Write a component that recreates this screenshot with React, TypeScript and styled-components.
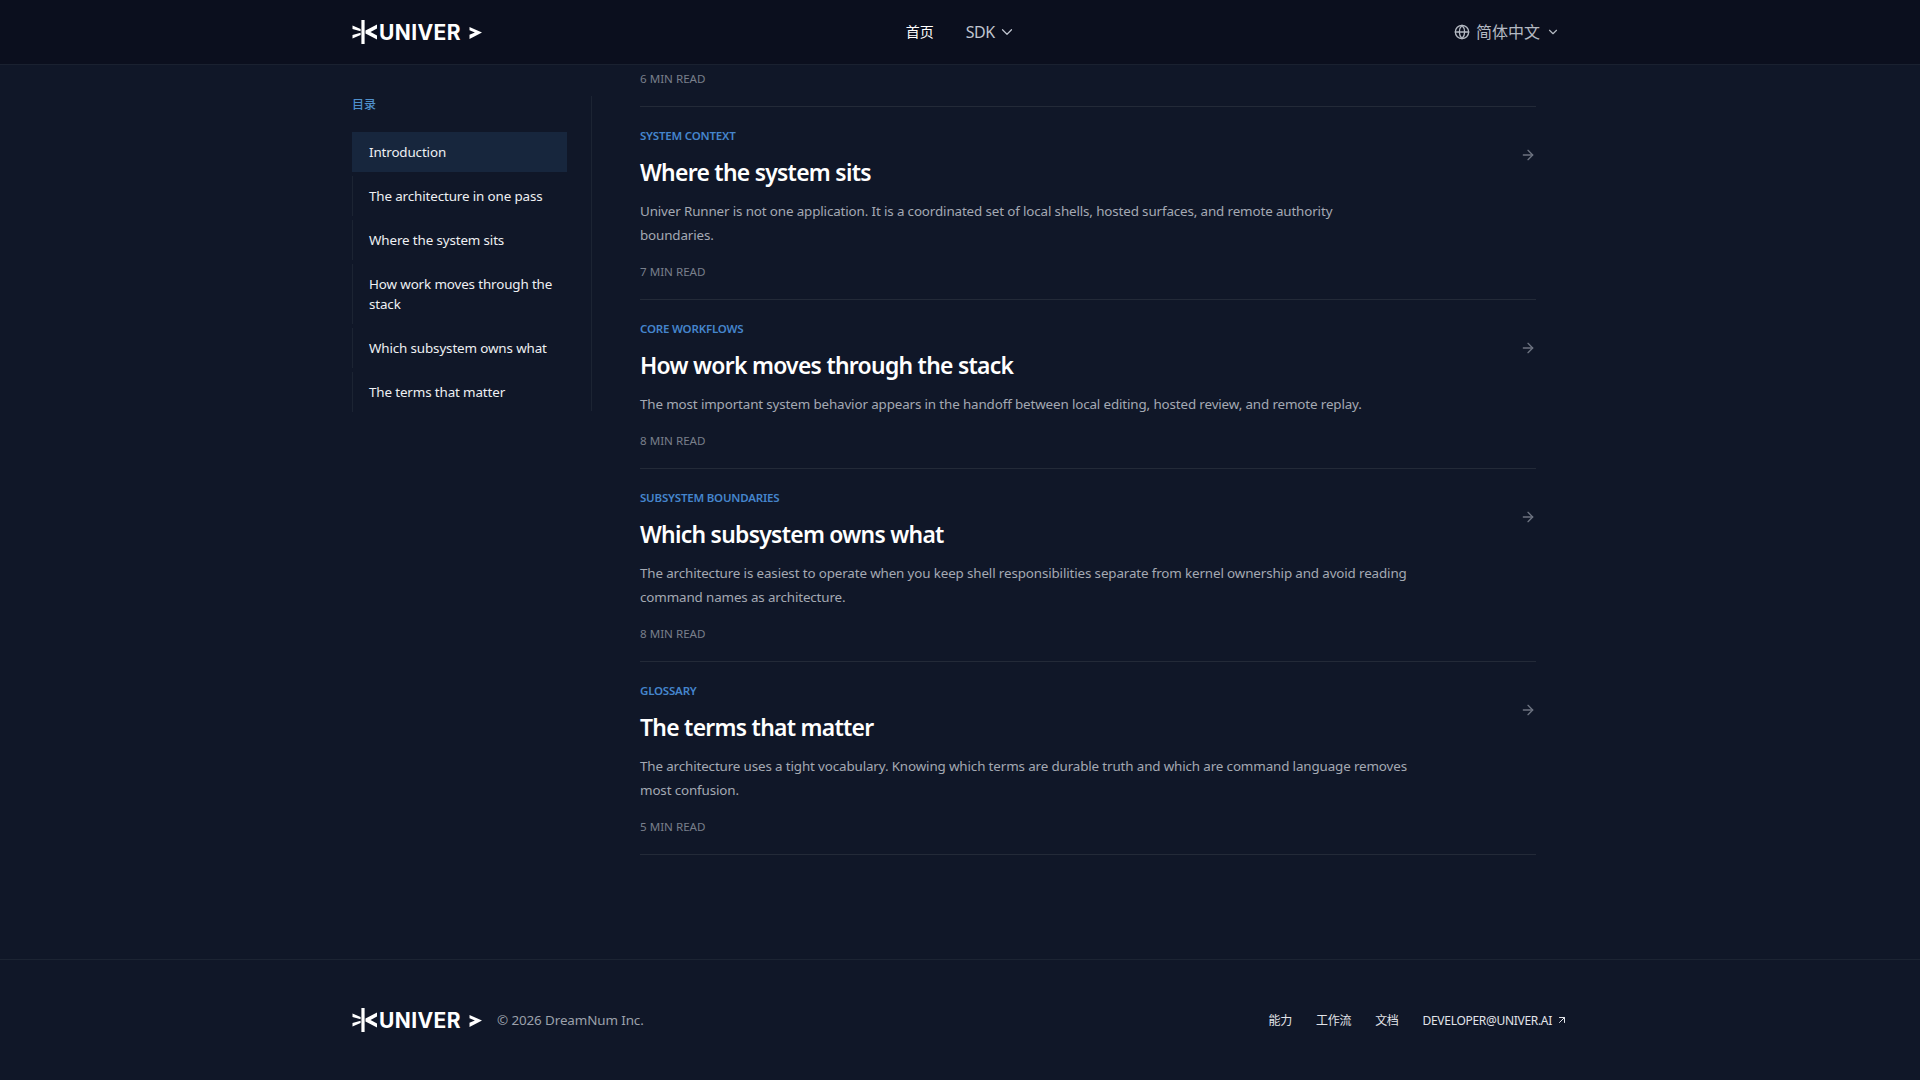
import React from 'react';
import styled, { createGlobalStyle } from 'styled-components';
import { ChevronDown, Globe, ArrowRight, ArrowUpRight } from 'lucide-react';

const Global = createGlobalStyle`
  html, body { margin: 0; padding: 0; background: #101728; }
  body { font-family: "Noto Sans", "Noto Sans CJK SC", sans-serif; color: #fff; }
  * { box-sizing: border-box; }
`;

const Page = styled.div`
  height: 1080px;
  display: flex;
  flex-direction: column;
  overflow: hidden;
  background: #101728;
`;
const Header = styled.header`
  height: 65px;
  flex: none;
  background: #0b0f1e;
  border-bottom: 1px solid #1a2130;
`;
const Bar = styled.div`
  width: 1216px;
  height: 100%;
  margin-left: 352px;
  display: grid;
  grid-template-columns: 1fr auto 1fr;
  align-items: center;
`;
const LogoWrap = styled.div`
  display: flex;
  align-items: center;
`;
const Nav = styled.nav`
  display: flex;
  align-items: center;
  gap: 32px;
  margin-left: 1.5px;
`;
const NavItem = styled.span<{ $active?: boolean }>`
  display: inline-flex;
  align-items: center;
  gap: 3px;
  font-size: 14px;
  color: ${p => (p.$active ? '#ffffff' : '#c0c5cf')};
`;
const UpLabel = styled.span<{ $latin?: boolean }>`
  margin-top: -2px;
  ${p => p.$latin && 'font-size: 16px; letter-spacing: -0.5px; margin-top: 0;'}
`;
const Lang = styled.div`
  justify-self: end;
  display: flex;
  align-items: center;
  gap: 6px;
  padding-right: 8px;
  font-size: 16px;
  color: #b4b9c2;
`;
const Main = styled.main`
  flex: 1;
  width: 1216px;
  margin-left: 352px;
  display: flex;
  min-height: 0;
`;
const Side = styled.aside`
  width: 240px;
  flex: none;
  margin-top: 31px;
  height: 315px;
  padding-right: 24px;
  border-right: 1px solid #1c2433;
`;
const SideTitle = styled.div`
  padding-top: 1px;
  margin-bottom: 19px;
  font-size: 12px;
  line-height: 16px;
  font-weight: 500;
  color: #4f8fcb;
`;
const SideList = styled.div`
  display: flex;
  flex-direction: column;
  gap: 4px;
`;
const SideItem = styled.div<{ $active?: boolean }>`
  font-size: 13.4px;
  line-height: 20px;
  letter-spacing: -0.13px;
  padding: 10px 12px 10px 16px;
  color: #eef0f3;
  border-left: 1px solid ${p => (p.$active ? '#17263d' : '#1c2433')};
  background: ${p => (p.$active ? '#17263d' : 'transparent')};
`;
const Articles = styled.section`
  margin-left: 48px;
  width: 896px;
`;
const TopMeta = styled.div`
  height: 42px;
  padding-top: 5px;
  border-bottom: 1px solid #232a38;
`;
const Row = styled.article`
  position: relative;
  padding: 20px 0 18px;
  border-bottom: 1px solid #232a38;
`;
const Eyebrow = styled.div`
  font-size: 11.5px;
  line-height: 18px;
  font-weight: 600;
  letter-spacing: -0.2px;
  color: #4585cc;
`;
const Title = styled.h2`
  margin: 12px 0 0;
  font-size: 22.9px;
  line-height: 32px;
  font-weight: 600;
  letter-spacing: -0.72px;
  color: #fff;
`;
const Desc = styled.p`
  margin: 10px 0 0;
  font-size: 13.4px;
  line-height: 24px;
  letter-spacing: -0.135px;
  white-space: pre-line;
  color: #a4a9b3;
`;
const Meta = styled.div<{ $flush?: boolean }>`
  margin-top: ${p => (p.$flush ? 0 : 16)}px;
  font-size: 11.6px;
  line-height: 18px;
  color: #797f8b;
`;
const RowArrow = styled.span`
  position: absolute;
  right: 0;
  top: 40px;
  color: #6d7380;
  display: flex;
`;
const Footer = styled.footer`
  height: 121px;
  flex: none;
  border-top: 1px solid #1c2433;
`;
const FootBar = styled.div`
  width: 1216px;
  height: 100%;
  margin-left: 352px;
  display: flex;
  align-items: center;
  justify-content: space-between;
`;
const FootLeft = styled.div`
  display: flex;
  align-items: center;
  gap: 15px;
`;
const Copy = styled.span`
  font-size: 13.4px;
  letter-spacing: -0.1px;
  color: #9ca1ab;
`;
const FootLinks = styled.div`
  display: flex;
  align-items: center;
  gap: 24px;
`;
const FootLink = styled.span`
  display: inline-flex;
  align-items: center;
  gap: 4px;
  font-size: 12px;
  letter-spacing: -0.3px;
  color: #e2e4e9;
`;

const Logo = () => (
  <svg width="130" height="26" viewBox="0 0 130 26" fill="none">
    <g fill="#fff">
      <rect x="9.4" y="1" width="3.2" height="24" />
      <path d="M0.5 6.5L8.6 10v2.2L0.5 10zM0.5 19.5L8.6 16v-2.2L0.5 16z" />
      <path d="M25 5.5L13.5 11.5v3L25 20.5v-4l-6.5-3.5 6.5-3.5z" />
      <path d="M117.5 8L130 13.5 117.5 20v-4.2l5.4-2.3-5.4-2.3z" />
    </g>
    <text x="27" y="21" fontFamily="Inter, 'Noto Sans', sans-serif" fontSize="21" fontWeight="700" fill="#fff" letterSpacing="0.4">UNIVER</text>
  </svg>
);

const items = [
  { e: 'SYSTEM CONTEXT', t: 'Where the system sits', d: 'Univer Runner is not one application. It is a coordinated set of local shells, hosted surfaces, and remote authority\nboundaries.', m: '7 MIN READ' },
  { e: 'CORE WORKFLOWS', t: 'How work moves through the stack', d: 'The most important system behavior appears in the handoff between local editing, hosted review, and remote replay.', m: '8 MIN READ' },
  { e: 'SUBSYSTEM BOUNDARIES', t: 'Which subsystem owns what', d: 'The architecture is easiest to operate when you keep shell responsibilities separate from kernel ownership and avoid reading\ncommand names as architecture.', m: '8 MIN READ' },
  { e: 'GLOSSARY', t: 'The terms that matter', d: 'The architecture uses a tight vocabulary. Knowing which terms are durable truth and which are command language removes\nmost confusion.', m: '5 MIN READ' },
];
const toc = ['Introduction', 'The architecture in one pass', 'Where the system sits', 'How work moves through the stack', 'Which subsystem owns what', 'The terms that matter'];

export default function App() {
  return (
    <Page>
      <Global />
      <Header>
        <Bar>
          <LogoWrap><Logo /></LogoWrap>
          <Nav>
            <NavItem $active><UpLabel>首页</UpLabel></NavItem>
            <NavItem><UpLabel $latin>SDK</UpLabel><ChevronDown size={18} strokeWidth={1.6} /></NavItem>
          </Nav>
          <Lang><Globe size={16} /><UpLabel>简体中文</UpLabel><ChevronDown size={14} /></Lang>
        </Bar>
      </Header>
      <Main>
        <Side>
          <SideTitle>目录</SideTitle>
          <SideList>
            {toc.map((t, i) => <SideItem key={t} $active={i === 0}>{t}</SideItem>)}
          </SideList>
        </Side>
        <Articles>
          <TopMeta><Meta $flush>6 MIN READ</Meta></TopMeta>
          {items.map(it => (
            <Row key={it.t}>
              <Eyebrow>{it.e}</Eyebrow>
              <Title>{it.t}</Title>
              <Desc>{it.d}</Desc>
              <Meta>{it.m}</Meta>
              <RowArrow><ArrowRight size={16} /></RowArrow>
            </Row>
          ))}
        </Articles>
      </Main>
      <Footer>
        <FootBar>
          <FootLeft><Logo /><Copy>© 2026 DreamNum Inc.</Copy></FootLeft>
          <FootLinks>
            <FootLink>能力</FootLink>
            <FootLink>工作流</FootLink>
            <FootLink>文档</FootLink>
            <FootLink>DEVELOPER@UNIVER.AI<ArrowUpRight size={12} /></FootLink>
          </FootLinks>
        </FootBar>
      </Footer>
    </Page>
  );
}
